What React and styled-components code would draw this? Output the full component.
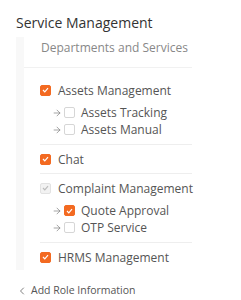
import React from 'react'
import styled, { createGlobalStyle } from 'styled-components'
import { ArrowRight, ChevronLeft } from 'lucide-react'

const GlobalStyle = createGlobalStyle`
  body {
    margin: 0;
    background: #fff;
    font-family: 'Open Sans', 'Liberation Sans', sans-serif;
  }
`

const Page = styled.div`
  width: 241px;
  height: 300px;
  overflow: hidden;
  padding-top: 13px;
  box-sizing: border-box;
`

const Title = styled.h1`
  margin: 0 0 0 16px;
  font-size: 14px;
  font-weight: 500;
  line-height: 20px;
  color: #333;
`

const Panel = styled.div`
  width: 176px;
  margin: 4px 0 0 16px;
  padding-left: 8px;
  box-sizing: border-box;
  background: #f8f8f8;
`

const Card = styled.div`
  background: #fff;
`

const CardHeader = styled.div`
  padding: 3px 0 11px 17px;
  font-size: 12px;
  line-height: 16px;
  color: #888;
  white-space: nowrap;
  border-bottom: 1px solid #f1f1f1;
`

const List = styled.div`
  padding: 8px 0 0 16px;
`

const Group = styled.div`
  padding: 6px 0 ${props => (props.$last ? '5px' : '6px')};
  border-bottom: ${props => (props.$last ? 'none' : '1px solid #eeeeee')};
`

const Row = styled.div`
  display: flex;
  align-items: center;
  height: ${props => (props.$sub ? '17px' : '16px')};
  padding-left: ${props => (props.$sub ? '12px' : '0')};
  font-size: 12px;
  color: #555;
  white-space: nowrap;
`

const SubList = styled.div`
  margin-top: 6px;
`

const Box = styled.span`
  width: 11px;
  height: 11px;
  box-sizing: border-box;
  border-radius: 2px;
  margin-right: ${props => (props.$sub ? '6px' : '7px')};
  display: inline-flex;
  align-items: center;
  justify-content: center;
  flex-shrink: 0;
  background: ${props =>
    props.$state === 'on' ? '#f36a21' : props.$state === 'off' ? '#fff' : '#f2f2f2'};
  border: 1px solid
    ${props =>
      props.$state === 'on' ? '#f36a21' : props.$state === 'off' ? '#d6d6d6' : '#e2e2e2'};
`

const Arrow = styled(ArrowRight)`
  color: #666;
  margin-right: 2px;
  flex-shrink: 0;
`

const BackLink = styled.div`
  display: flex;
  align-items: center;
  margin: 13px 0 0 16px;
  font-size: 10.5px;
  line-height: 15px;
  color: #555;
  gap: 3px;
`

const Check = ({ state, sub }) => (
  <Box $state={state} $sub={sub}>
    {state !== 'off' && (
      <svg width="7" height="6" viewBox="0 0 7 6">
        <path
          d="M1 3 L2.8 4.8 L6 1.2"
          fill="none"
          stroke={state === 'on' ? '#fff' : '#bbb'}
          strokeWidth="1.2"
        />
      </svg>
    )}
  </Box>
)

const SubRow = ({ state, label }) => (
  <Row $sub>
    <Arrow size={10} strokeWidth={1.4} />
    <Check state={state} sub />
    {label}
  </Row>
)

const groups = [
  {
    label: 'Assets Management',
    state: 'on',
    subs: [
      { label: 'Assets Tracking', state: 'off' },
      { label: 'Assets Manual', state: 'off' },
    ],
  },
  { label: 'Chat', state: 'on' },
  {
    label: 'Complaint Management',
    state: 'disabled',
    subs: [
      { label: 'Quote Approval', state: 'on' },
      { label: 'OTP Service', state: 'off' },
    ],
  },
  { label: 'HRMS Management', state: 'on' },
]

export default function App() {
  return (
    <>
      <GlobalStyle />
      <Page>
        <Title>Service Management</Title>
        <Panel>
          <Card>
            <CardHeader>Departments and Services</CardHeader>
            <List>
              {groups.map((g, i) => (
                <Group key={g.label} $last={i === groups.length - 1}>
                  <Row>
                    <Check state={g.state} />
                    {g.label}
                  </Row>
                  {g.subs && (
                    <SubList>
                      {g.subs.map(s => (
                        <SubRow key={s.label} {...s} />
                      ))}
                    </SubList>
                  )}
                </Group>
              ))}
            </List>
          </Card>
        </Panel>
        <BackLink>
          <ChevronLeft size={12} strokeWidth={1.5} />
          Add Role Information
        </BackLink>
      </Page>
    </>
  )
}
